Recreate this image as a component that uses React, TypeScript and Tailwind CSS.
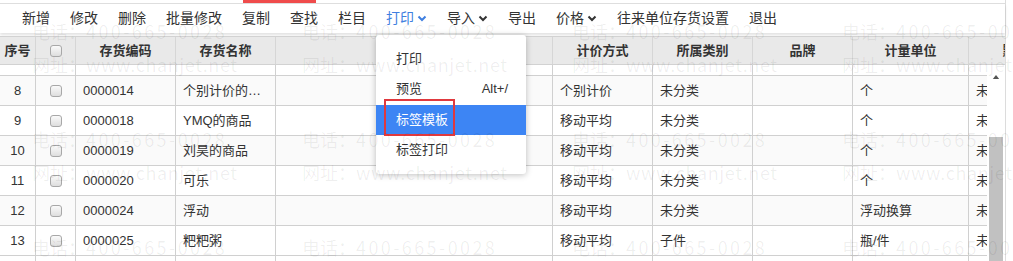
import { Fragment } from "react"

const tools = [
  { label: "新增" },
  { label: "修改" },
  { label: "删除" },
  { label: "批量修改" },
  { label: "复制" },
  { label: "查找" },
  { label: "栏目" },
  { label: "打印", menu: true, active: true },
  { label: "导入", menu: true },
  { label: "导出" },
  { label: "价格", menu: true },
  { label: "往来单位存货设置" },
  { label: "退出" },
]

const rows = [
  { no: 8, code: "0000014", name: "个别计价的…", method: "个别计价", cat: "未分类", unit: "个" },
  { no: 9, code: "0000018", name: "YMQ的商品", method: "移动平均", cat: "未分类", unit: "个" },
  { no: 10, code: "0000019", name: "刘昊的商品", method: "移动平均", cat: "未分类", unit: "个" },
  { no: 11, code: "0000020", name: "可乐", method: "移动平均", cat: "未分类", unit: "个" },
  { no: 12, code: "0000024", name: "浮动", method: "移动平均", cat: "未分类", unit: "浮动换算" },
  { no: 13, code: "0000025", name: "粑粑粥", method: "移动平均", cat: "子件", unit: "瓶/件" },
]

const cols = "grid grid-cols-[36px_40px_100px_100px_277px_100px_100px_100px_116px_120px]"

function Chevron() {
  return (
    <svg width="10" height="7" viewBox="0 0 10 7" className="ml-[3px]">
      <path d="M1.5 1.5 L5 5 L8.5 1.5" fill="none" stroke="currentColor" strokeWidth="2" />
    </svg>
  )
}

function Check() {
  return (
    <span className="block h-[12px] w-[12px] rounded-[3px] border border-[#a8a8a8] bg-linear-to-b from-[#fafafa] to-[#dedede]" />
  )
}

// faint repeated contact watermark over the whole page
function Watermark() {
  const xs = [32, 302, 572, 842]
  const ys = [20, 128, 236]
  return (
    <div className="pointer-events-none absolute inset-0 overflow-hidden text-[18px] leading-[22px] text-black/[0.065] [font-family:'Noto_Sans_CJK_SC',sans-serif]">
      {ys.map((y) =>
        xs.map((x) => (
          <div key={`${x}-${y}`} className="absolute whitespace-nowrap" style={{ left: x, top: y }}>
            <div>
              电话：<span className="tracking-[2.4px]">400-665-0028</span>
            </div>
            <div className="mt-[11px]">
              网址：<span className="tracking-[0.6px]">www.chanjet.net</span>
            </div>
          </div>
        ))
      )}
    </div>
  )
}

export default function App() {
  return (
    <div className="relative h-[261px] w-[1013px] overflow-hidden bg-white text-[13px] text-[#333] [font-family:'Liberation_Sans','Noto_Sans_CJK_SC',sans-serif]">
      <div className="w-[1006px] border-r border-[#dcdcdc]">
        {/* toolbar */}
        <div className="relative h-[4px] border-b border-[#dedede]">
          <div className="absolute left-[243px] top-0 h-[3px] w-[73px] bg-[#ef4b4b]" />
        </div>
        <div className="flex h-[29px] items-center pl-[12px] text-[14px] shadow-[0_2px_3px_rgba(0,0,0,0.12)]">
          {tools.map((t) => (
            <div
              key={t.label}
              className={`flex items-center px-[10px] ${t.active ? "text-[#3f7fe0]" : "text-[#333]"}`}
            >
              <span>{t.label}</span>
              {t.menu && <Chevron />}
            </div>
          ))}
        </div>

        {/* header */}
        <div className="mt-[3px] h-[29px] overflow-hidden border-y border-[#d2d2d2] bg-[#e9e9e9] font-bold">
          <div className={`${cols} h-full`}>
            {["序号", "", "存货编码", "存货名称", "规格型号", "计价方式", "所属类别", "品牌", "计量单位", "默认仓库"].map(
              (h, i) => (
                <div key={i} className="flex items-center justify-center border-r border-[#d6d6d6]">
                  {i === 1 ? <Check /> : h}
                </div>
              )
            )}
          </div>
        </div>

        {/* body */}
        <div className="flex h-[196px]">
          <div className="w-[988px] overflow-hidden">
            <div className={`${cols} h-[11px] border-b border-[#d0d0d0]`}>
              {Array.from({ length: 10 }).map((_, i) => (
                <div key={i} className="border-r border-[#d0d0d0]" />
              ))}
            </div>
            {rows.map((r) => (
              <div
                key={r.no}
                className={`${cols} h-[30px] border-b border-[#d0d0d0] ${r.no % 2 === 0 ? "bg-[#fafafa]" : "bg-white"}`}
              >
                <div className="flex items-center justify-center border-r border-[#d0d0d0]">{r.no}</div>
                <div className="flex items-center justify-center border-r border-[#d0d0d0]">
                  <Check />
                </div>
                {[r.code, r.name, "", r.method, r.cat, "", r.unit, "未设置"].map((v, i) => (
                  <Fragment key={i}>
                    <div className="flex items-center overflow-hidden whitespace-nowrap border-r border-[#d0d0d0] pl-[7px]">
                      {v}
                    </div>
                  </Fragment>
                ))}
              </div>
            ))}
            <div className={`${cols} h-[10px]`}>
              {Array.from({ length: 10 }).map((_, i) => (
                <div key={i} className="border-r border-[#d0d0d0]" />
              ))}
            </div>
          </div>
          {/* scrollbar */}
          <div className="flex w-[18px] flex-col items-center bg-white pt-[10px]">
            <svg width="8" height="5" viewBox="0 0 8 5">
              <path d="M0 5 L4 0 L8 5 Z" fill="#555" />
            </svg>
            <div className="mt-[58px] h-[140px] w-[14px] bg-[#c1c1c1]" />
          </div>
        </div>
      </div>

      {/* print menu */}
      <div className="absolute left-[376px] top-[35px] w-[150px] rounded-[3px] bg-white py-[9px] shadow-[0_1px_6px_rgba(0,0,0,0.25)]">
        <div className="flex h-[30px] items-center pl-[20px]">打印</div>
        <div className="flex h-[30px] items-center justify-between pl-[20px] pr-[18px]">
          <span>预览</span>
          <span>Alt+/</span>
        </div>
        <div className="mt-[1px] flex h-[30px] items-center bg-[#3d85f4] pl-[20px] text-white">标签模板</div>
        <div className="flex h-[30px] items-center pl-[20px]">标签打印</div>
      </div>
      <div className="absolute left-[384px] top-[99px] h-[37px] w-[71px] border-2 border-[#e0393e]" />

      <Watermark />
    </div>
  )
}
